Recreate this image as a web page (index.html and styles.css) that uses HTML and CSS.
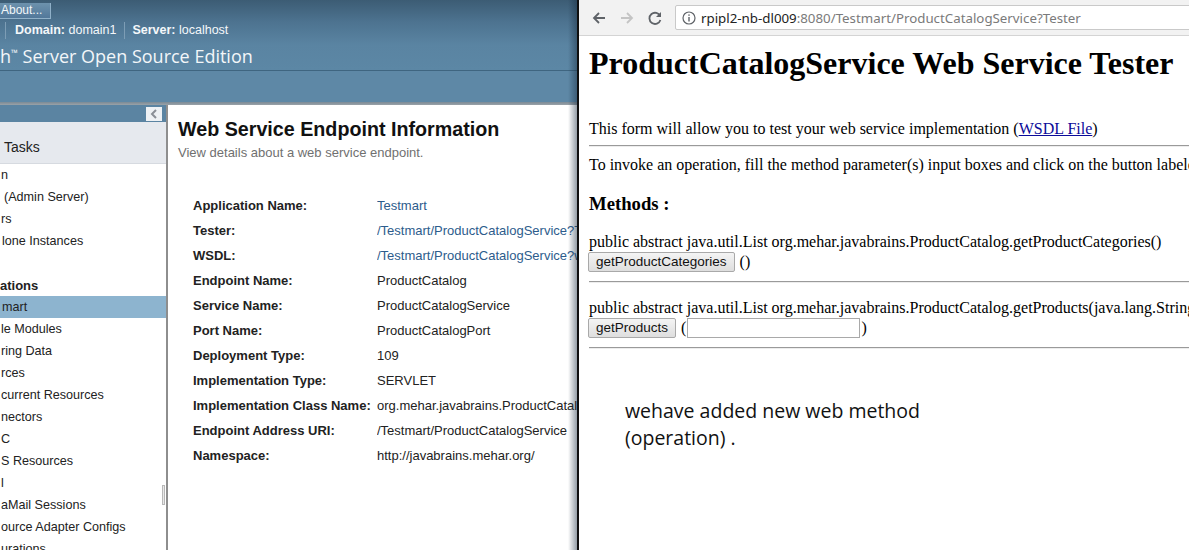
FILE: index.html
```html
<!DOCTYPE html>
<html>
<head>
<meta charset="utf-8">
<link rel="stylesheet" href="styles.css">
</head>
<body>
<div class="screen">
  <section class="console">
    <header class="masthead">
      <div class="about-row"><span class="about">About...</span></div>
      <div class="info-row">
        <span class="sep"></span>
        <span class="info"><b>Domain:</b> domain1</span>
        <span class="sep"></span>
        <span class="info"><b>Server:</b> localhost</span>
      </div>
      <div class="product">h<sup class="tm">™</sup> Server Open Source Edition</div>
      <div class="band"></div>
      <div class="band-edge"></div>
    </header>
    <div class="console-body">
      <nav class="sidebar">
        <div class="side-head">
          <span class="collapse"><svg width="8" height="10" viewBox="0 0 8 10"><path d="M6 1 L2 5 L6 9" fill="none" stroke="#8a8f96" stroke-width="2"/></svg></span>
        </div>
        <div class="tasks">Tasks</div>
        <ul class="tree">
          <li class="item">n</li>
          <li class="item in4">(Admin Server)</li>
          <li class="item">rs</li>
          <li class="item in2">lone Instances</li>
          <li class="item"></li>
          <li class="item group">ations</li>
          <li class="item in2 selected">mart</li>
          <li class="item">le Modules</li>
          <li class="item">ring Data</li>
          <li class="item">rces</li>
          <li class="item">current Resources</li>
          <li class="item">nectors</li>
          <li class="item">C</li>
          <li class="item">S Resources</li>
          <li class="item">l</li>
          <li class="item">aMail Sessions</li>
          <li class="item">ource Adapter Configs</li>
          <li class="item">urations</li>
        </ul>
        <span class="thumb"></span>
      </nav>
      <main class="endpoint">
        <h1 class="ep-title">Web Service Endpoint Information</h1>
        <p class="ep-sub">View details about a web service endpoint.</p>
        <dl class="props">
          <dt>Application Name:</dt><dd><a class="link">Testmart</a></dd>
          <dt>Tester:</dt><dd><a class="link">/Testmart/ProductCatalogService?Tester</a></dd>
          <dt>WSDL:</dt><dd><a class="link">/Testmart/ProductCatalogService?wsdl</a></dd>
          <dt>Endpoint Name:</dt><dd>ProductCatalog</dd>
          <dt>Service Name:</dt><dd>ProductCatalogService</dd>
          <dt>Port Name:</dt><dd>ProductCatalogPort</dd>
          <dt>Deployment Type:</dt><dd>109</dd>
          <dt>Implementation Type:</dt><dd>SERVLET</dd>
          <dt>Implementation Class Name:</dt><dd>org.mehar.javabrains.ProductCatalog</dd>
          <dt>Endpoint Address URI:</dt><dd>/Testmart/ProductCatalogService</dd>
          <dt>Namespace:</dt><dd>http://javabrains.mehar.org/</dd>
        </dl>
      </main>
    </div>
    <span class="edge-shade"></span>
  </section>
  <div class="divider"></div>
  <section class="browser">
    <div class="toolbar">
      <svg class="nav-icon" width="16" height="16" viewBox="0 0 16 16"><path d="M14 8 H3 M8 3 L3 8 L8 13" fill="none" stroke="#5f6368" stroke-width="1.8"/></svg>
      <svg class="nav-icon" width="16" height="16" viewBox="0 0 16 16"><path d="M2 8 H13 M8 3 L13 8 L8 13" fill="none" stroke="#c4c4c4" stroke-width="1.8"/></svg>
      <svg class="nav-icon" width="16" height="16" viewBox="0 0 16 16"><path d="M13.2 6.2 A5.6 5.6 0 1 0 13.4 10" fill="none" stroke="#5f6368" stroke-width="1.8"/><path d="M14 2 V7 H9 Z" fill="#5f6368"/></svg>
      <div class="omnibox">
        <svg class="info-icon" width="14" height="14" viewBox="0 0 14 14"><circle cx="7" cy="7" r="6" fill="none" stroke="#5f6368" stroke-width="1.2"/><rect x="6.3" y="6" width="1.4" height="4.5" fill="#5f6368"/><rect x="6.3" y="3.4" width="1.4" height="1.4" fill="#5f6368"/></svg>
        <span class="url"><span class="host">rpipl2-nb-dl009</span>:8080/Testmart/ProductCatalogService?Tester</span>
      </div>
    </div>
    <div class="page">
      <h1 class="tester-title">ProductCatalogService Web Service Tester</h1>
      <p class="intro">This form will allow you to test your web service implementation (<a class="wsdl">WSDL File</a>)</p>
      <hr class="rule r1">
      <p class="howto">To invoke an operation, fill the method parameter(s) input boxes and click on the button labeled with the method name.</p>
      <h3 class="methods">Methods :</h3>
      <p class="sig s1">public abstract java.util.List org.mehar.javabrains.ProductCatalog.getProductCategories()</p>
      <div class="call"><span class="btn">getProductCategories</span><span class="paren">()</span></div>
      <hr class="rule r2">
      <p class="sig s2">public abstract java.util.List org.mehar.javabrains.ProductCatalog.getProducts(java.lang.String)</p>
      <div class="call"><span class="btn">getProducts</span><span class="paren">(</span><span class="field"></span><span class="paren close">)</span></div>
      <hr class="rule r3">
      <p class="note">wehave added new web method<br>(operation) .</p>
    </div>
  </section>
</div>
</body>
</html>
```

FILE: styles.css
```css
* { box-sizing: border-box; }
html, body { margin: 0; padding: 0; }
body { width: 1189px; height: 550px; overflow: hidden; background: #fff; }

.screen {
  display: grid;
  grid-template-columns: 577px 2px 610px;
  height: 550px;
}

/* ---------- Admin console ---------- */
.console {
  position: relative;
  overflow: hidden;
  font-family: "Liberation Sans", Arial, sans-serif;
  display: flex;
  flex-direction: column;
  height: 550px;
}
.edge-shade {
  position: absolute;
  top: 0; right: 0; bottom: 0;
  width: 9px;
  background: linear-gradient(to right, rgba(20,40,60,0), rgba(20,40,60,0.45));
  pointer-events: none;
}
.masthead {
  background: linear-gradient(to bottom, #3c5c74 0px, #4d7390 22px, #5a84a2 45px, #5c87a5 70px);
  color: #eef3f7;
  flex: none;
}
.about-row { height: 16px; }
.about {
  display: inline-block;
  height: 16px;
  width: 51px;
  line-height: 14px;
  font-size: 12px;
  color: #f2f6f9;
  background: linear-gradient(#6d92ad, #52789a);
  border: 1px solid #8fb0c8;
  border-left: none;
  border-top: none;
  padding-left: 1px;
}
.info-row {
  height: 26px;
  display: flex;
  align-items: center;
  font-size: 12.5px;
  color: #f4f7fa;
  padding-top: 2px;
}
.info-row b { font-weight: bold; }
.sep {
  width: 1px;
  height: 17px;
  background: #7d9db5;
  margin: 0 9px 0 5px;
}
.info-row .info + .sep { margin: 0 7px 0 8px; }
.product {
  line-height: 28px;
  font-family: "Open Sans", "Liberation Sans", sans-serif;
  font-size: 18px;
  color: #f3f6f9;
  white-space: nowrap;
  border-bottom: 1px solid #3f6580;
  height: 29px;
}
.tm { font-size: 9px; vertical-align: 7px; line-height: 0; }
.band {
  height: 31px;
  background: #5e88a6;
}
.band-edge {
  height: 3px;
  background: linear-gradient(#7a8a96, #9aa2a8);
}

.console-body {
  flex: 1;
  display: flex;
  min-height: 0;
}
.sidebar {
  position: relative;
  width: 168px;
  flex: none;
  border-right: 2px solid #8e8e8e;
  background: #fff;
  font-size: 12.6px;
  color: #222;
}
.side-head {
  height: 17px;
  background: #5b84a2;
  display: flex;
  justify-content: flex-end;
  align-items: center;
  padding-right: 4px;
}
.collapse {
  width: 16px;
  height: 14px;
  background: #eef1f4;
  display: flex;
  align-items: center;
  justify-content: center;
}
.tasks {
  height: 42px;
  background: #e6e9ee;
  border-bottom: 1px solid #d6dae0;
  font-size: 14px;
  padding: 17px 0 0 4px;
  line-height: 16px;
}
.tree { list-style: none; margin: 0; padding: 0; }
.item {
  height: 22px;
  line-height: 23px;
  padding-left: 1px;
  white-space: nowrap;
}
.item.in4 { padding-left: 4px; }
.item.in2 { padding-left: 2px; }
.item.group { font-weight: bold; font-size: 13px; padding-left: 0; }
.item.selected { background: #8db4cf; }
.thumb {
  position: absolute;
  right: 1px;
  top: 380px;
  width: 3px;
  height: 20px;
  border: 1px solid #b8b8b8;
  background: #e9e9e9;
}

.endpoint {
  flex: 1;
  min-width: 0;
  overflow: hidden;
  background: #fff;
  padding: 12px 0 0 10px;
}
.ep-title {
  margin: 0;
  font-size: 19.7px;
  line-height: 24px;
  font-weight: bold;
  color: #111;
  white-space: nowrap;
}
.ep-sub {
  margin: 4px 0 0;
  font-size: 13px;
  line-height: 15px;
  color: #707070;
}
.props {
  margin: 33px 0 0 15px;
  display: grid;
  grid-template-columns: 184px 1fr;
  grid-auto-rows: 25px;
  align-items: center;
  font-size: 13px;
  white-space: nowrap;
}
.props dt { font-weight: bold; color: #222; }
.props dd { margin: 0; color: #222; overflow: hidden; }
.link { color: #2d5c8c; text-decoration: none; }

.divider { background: #101010; }

/* ---------- Browser ---------- */
.browser {
  overflow: hidden;
  background: #fff;
  display: flex;
  flex-direction: column;
}
.toolbar {
  height: 36px;
  flex: none;
  background: #f2f2f2;
  border-bottom: 1px solid #d4d4d4;
  display: flex;
  align-items: center;
  padding-left: 12px;
  gap: 12px;
}
.nav-icon { flex: none; }
.omnibox {
  flex: none;
  width: 560px;
  height: 25px;
  background: #fff;
  border: 1px solid #c9c9c9;
  border-radius: 2px;
  display: flex;
  align-items: center;
  padding-left: 6px;
  gap: 5px;
}
.url {
  font-family: "Noto Sans", "Liberation Sans", sans-serif;
  font-size: 13.3px;
  color: #7a7a7a;
  white-space: nowrap;
}
.host { color: #222; }

.page {
  font-family: "Liberation Serif", "Times New Roman", serif;
  font-size: 16px;
  color: #000;
  padding-left: 10px;
  white-space: nowrap;
}
.tester-title {
  margin: 9px 0 0;
  font-size: 32px;
  line-height: 37px;
  font-weight: bold;
}
.intro { margin: 38px 0 0; line-height: 18px; }
.wsdl { text-decoration: underline; color: #0b0b9a; }
.rule {
  margin: 0;
  height: 2px;
  border: none;
  border-top: 1px solid #9a9a9a;
  border-bottom: 1px solid #ededed;
}
.r1 { margin-top: 7px; }
.howto { margin: 9px 0 0; line-height: 18px; }
.methods { margin: 19px 0 0; font-size: 18.72px; line-height: 22px; font-weight: bold; }
.sig { margin: 0; line-height: 18px; }
.s1 { margin-top: 18px; }
.s2 { margin-top: 16px; }
.call {
  margin-top: 1px;
  height: 20px;
  display: flex;
  align-items: center;
  margin-left: -1px;
}
.btn {
  height: 20px;
  padding: 0 7px;
  font-family: "Liberation Sans", Arial, sans-serif;
  font-size: 13.5px;
  line-height: 18px;
  color: #111;
  background: linear-gradient(#f4f4f4, #dedede);
  border: 1px solid #a9a9a9;
  border-radius: 2px;
}
.paren { margin-left: 5px; line-height: 18px; }
.field {
  margin-left: 1px;
  width: 173px;
  height: 20px;
  border: 1px solid #a9a9a9;
  background: #fff;
}
.paren.close { margin-left: 1px; }
.r2, .r3 { margin-top: 9px; }
.note {
  margin: 48px 0 0;
  padding-left: 36px;
  font-family: "Open Sans", "Noto Sans", sans-serif;
  font-size: 19.5px;
  line-height: 27px;
  color: #111;
}
```
